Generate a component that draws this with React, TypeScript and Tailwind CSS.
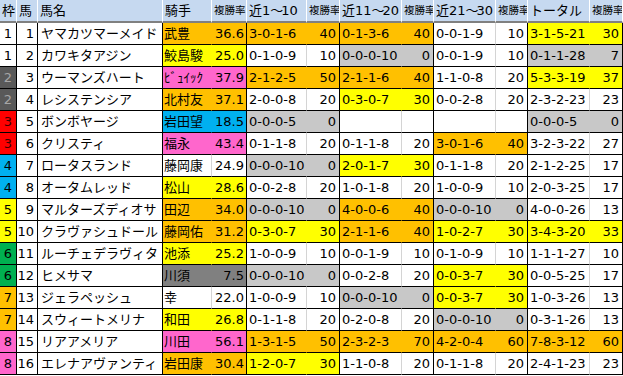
import React from "react";

type C = "o" | "y" | "g" | "w" | "p" | "b" | "d";

const LEFT: Record<C, string> = {
  o: "bg-[#ffc000] border-r-[#ffc000]",
  y: "bg-[#ffff00] border-r-[#ffff00]",
  g: "bg-[#c8c8c8] border-r-[#c8c8c8]",
  w: "bg-white border-r-[#d4d4d4]",
  p: "bg-[#ff66cc] border-r-[#ff66cc]",
  b: "bg-[#00b0f0] border-r-[#00b0f0]",
  d: "bg-[#808080] border-r-[#808080]",
};
const RIGHT: Record<C, string> = {
  o: "bg-[#ffc000]",
  y: "bg-[#ffff00]",
  g: "bg-[#c8c8c8]",
  w: "bg-white",
  p: "bg-[#ff66cc]",
  b: "bg-[#00b0f0]",
  d: "bg-[#808080]",
};

const WAKU: Record<number, string> = {
  1: "bg-white text-black",
  2: "bg-[#595959] text-[#a6a6a6]",
  3: "bg-[#ff0000] text-[#3a0000]",
  4: "bg-[#00b0f0] text-black",
  5: "bg-[#ffff00] text-black",
  6: "bg-[#00b050] text-black",
  7: "bg-[#ffc000] text-black",
  8: "bg-[#ff66cc] text-black",
};

type S = [string, string, C];
type Row = { w: number; u: number; name: string; j: string; jc: C; jr: string; s: S[] };

const rows: Row[] = [
  { w: 1, u: 1, name: "ヤマカツマーメイド", j: "武豊", jc: "o", jr: "36.6", s: [["3-0-1-6", "40", "o"], ["0-1-3-6", "40", "o"], ["0-0-1-9", "10", "w"], ["3-1-5-21", "30", "y"]] },
  { w: 1, u: 2, name: "カワキタアジン", j: "鮫島駿", jc: "y", jr: "25.0", s: [["0-1-0-9", "10", "w"], ["0-0-0-10", "0", "g"], ["0-0-1-9", "10", "w"], ["0-1-1-28", "7", "g"]] },
  { w: 2, u: 3, name: "ウーマンズハート", j: "ﾋﾞｭｲｯｸ", jc: "p", jr: "37.9", s: [["2-1-2-5", "50", "o"], ["2-1-1-6", "40", "o"], ["1-1-0-8", "20", "w"], ["5-3-3-19", "37", "y"]] },
  { w: 2, u: 4, name: "レシステンシア", j: "北村友", jc: "o", jr: "37.1", s: [["2-0-0-8", "20", "w"], ["0-3-0-7", "30", "y"], ["0-0-2-8", "20", "w"], ["2-3-2-23", "23", "w"]] },
  { w: 3, u: 5, name: "ボンボヤージ", j: "岩田望", jc: "b", jr: "18.5", s: [["0-0-0-5", "0", "g"], ["", "", "w"], ["", "", "w"], ["0-0-0-5", "0", "g"]] },
  { w: 3, u: 6, name: "クリスティ", j: "福永", jc: "p", jr: "43.4", s: [["0-1-1-8", "20", "w"], ["0-1-1-8", "20", "w"], ["3-0-1-6", "40", "o"], ["3-2-3-22", "27", "w"]] },
  { w: 4, u: 7, name: "ロータスランド", j: "藤岡康", jc: "w", jr: "24.9", s: [["0-0-0-10", "0", "g"], ["2-0-1-7", "30", "y"], ["0-1-1-8", "20", "w"], ["2-1-2-25", "17", "w"]] },
  { w: 4, u: 8, name: "オータムレッド", j: "松山", jc: "y", jr: "28.6", s: [["0-0-2-8", "20", "w"], ["1-0-1-8", "20", "w"], ["1-0-0-9", "10", "w"], ["2-0-3-25", "17", "w"]] },
  { w: 5, u: 9, name: "マルターズディオサ", j: "田辺", jc: "o", jr: "34.0", s: [["0-0-0-10", "0", "g"], ["4-0-0-6", "40", "o"], ["0-0-0-10", "0", "g"], ["4-0-0-26", "13", "w"]] },
  { w: 5, u: 10, name: "クラヴァシュドール", j: "藤岡佑", jc: "o", jr: "31.2", s: [["0-3-0-7", "30", "y"], ["2-1-1-6", "40", "o"], ["1-0-2-7", "30", "y"], ["3-4-3-20", "33", "y"]] },
  { w: 6, u: 11, name: "ルーチェデラヴィタ", j: "池添", jc: "y", jr: "25.2", s: [["1-0-0-9", "10", "w"], ["0-0-1-9", "10", "w"], ["0-1-0-9", "10", "w"], ["1-1-1-27", "10", "w"]] },
  { w: 6, u: 12, name: "ヒメサマ", j: "川須", jc: "d", jr: "7.5", s: [["0-0-0-10", "0", "g"], ["0-0-2-8", "20", "w"], ["0-0-3-7", "30", "y"], ["0-0-5-25", "17", "w"]] },
  { w: 7, u: 13, name: "ジェラペッシュ", j: "幸", jc: "w", jr: "22.0", s: [["1-0-0-9", "10", "w"], ["0-0-0-10", "0", "g"], ["0-0-3-7", "30", "y"], ["1-0-3-26", "13", "w"]] },
  { w: 7, u: 14, name: "スウィートメリナ", j: "和田", jc: "y", jr: "26.8", s: [["0-1-1-8", "20", "w"], ["0-2-0-8", "20", "w"], ["0-0-0-10", "0", "g"], ["0-3-1-26", "13", "w"]] },
  { w: 8, u: 15, name: "リアアメリア", j: "川田", jc: "p", jr: "56.1", s: [["1-3-1-5", "50", "o"], ["2-3-2-3", "70", "o"], ["4-2-0-4", "60", "o"], ["7-8-3-12", "60", "o"]] },
  { w: 8, u: 16, name: "エレナアヴァンティ", j: "岩田康", jc: "o", jr: "30.4", s: [["1-2-0-7", "30", "y"], ["1-1-0-8", "20", "w"], ["0-1-1-8", "20", "w"], ["2-4-1-23", "23", "w"]] },
];

const GRID =
  "grid grid-cols-[17px_21px_125px_49px_35px_60px_33px_62px_32px_62px_32px_62px_33px]";

const cell = "h-[22px] flex items-center border-b border-b-black whitespace-nowrap overflow-hidden";

function Range({ a, b }: { a: string; b: string }) {
  return (
    <span>
      近{a}
      <span className="tracking-[-2px]">～</span>
      {b}
    </span>
  );
}

export default function App() {
  const hc =
    "h-[23px] flex items-center pl-[2px] border-r border-r-white border-b-2 border-b-[#808080] bg-[#c6d9f0] whitespace-nowrap overflow-hidden";
  const hs = hc + " text-[10.5px]";
  return (
    <div className="w-[623px] h-[376px] bg-white text-black text-[13px] leading-none font-['DejaVu_Sans','Noto_Sans_CJK_JP',sans-serif]">
      <div className={GRID}>
        <div className={hc}>枠</div>
        <div className={hc}>馬</div>
        <div className={hc}>馬名</div>
        <div className={hc}>騎手</div>
        <div className={hs}>複勝率</div>
        <div className={hc}>
          <Range a="1" b="10" />
        </div>
        <div className={hs}>複勝率</div>
        <div className={hc}>
          <Range a="11" b="20" />
        </div>
        <div className={hs}>複勝率</div>
        <div className={hc}>
          <Range a="21" b="30" />
        </div>
        <div className={hs}>複勝率</div>
        <div className={hc}>トータル</div>
        <div className={hs}>複勝率</div>

        {rows.map((r) => (
          <React.Fragment key={r.u}>
            <div className={`${cell} ${WAKU[r.w]} justify-center border-r border-r-black`}>{r.w}</div>
            <div className={`${cell} bg-white justify-end pr-[3px] border-r border-r-black`}>{r.u}</div>
            <div className={`${cell} bg-white pl-[3px] border-r border-r-black`}>{r.name}</div>
            <div className={`${cell} ${LEFT[r.jc]} pl-[1px] border-r`}>{r.j}</div>
            <div className={`${cell} ${RIGHT[r.jc]} justify-end pr-[2px] border-r border-r-black`}>{r.jr}</div>
            {r.s.map((s, i) => (
              <React.Fragment key={i}>
                <div className={`${cell} ${LEFT[s[2]]} pl-[2px] border-r`}>{s[0]}</div>
                <div className={`${cell} ${RIGHT[s[2]]} justify-end pr-[3px] border-r border-r-black`}>{s[1]}</div>
              </React.Fragment>
            ))}
          </React.Fragment>
        ))}
      </div>
    </div>
  );
}
